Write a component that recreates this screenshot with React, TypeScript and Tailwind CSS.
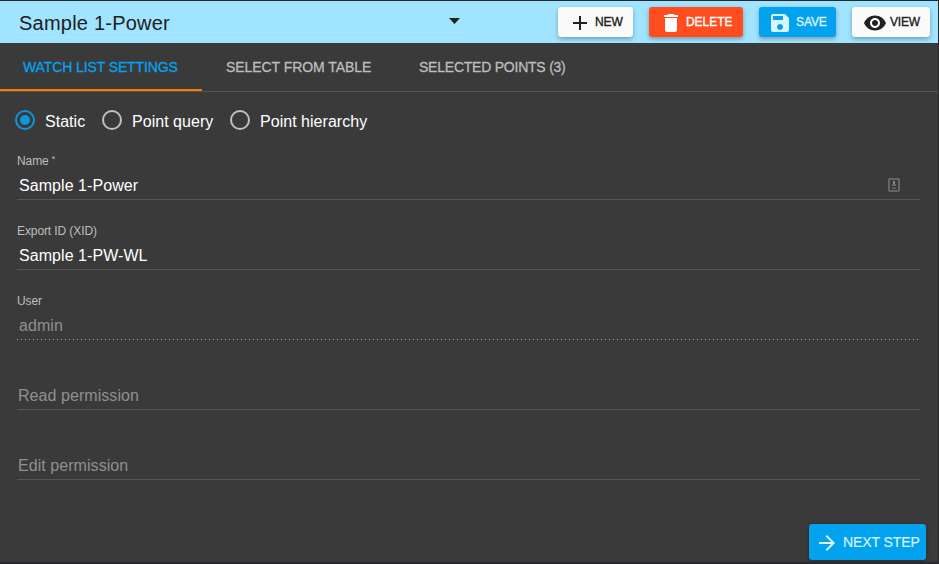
import type { ReactNode } from "react";

const icons = {
  add: "M19 13h-6v6h-2v-6H5v-2h6V5h2v6h6v2z",
  remove: "M6 19c0 1.1.9 2 2 2h8c1.1 0 2-.9 2-2V7H6v12zM19 4h-3.500l-1-1h-5l-1 1H5v2h14V4z",
  save: "M17 3H5c-1.110 0-2 .9-2 2v14c0 1.100.890 2 2 2h14c1.100 0 2-.9 2-2V7l-4-4zm-5 16c-1.660 0-3-1.340-3-3s1.340-3 3-3 3 1.340 3 3-1.340 3-3 3zm3-10H5V5h10v4z",
  view: "M12 4.500C7 4.500 2.730 7.610 1 12c1.730 4.390 6 7.500 11 7.500s9.270-3.110 11-7.500c-1.730-4.390-6-7.500-11-7.500zM12 17c-2.760 0-5-2.240-5-5s2.240-5 5-5 5 2.240 5 5-2.240 5-5 5zm0-8c-1.660 0-3 1.340-3 3s1.340 3 3 3 3-1.340 3-3-1.340-3-3-3z",
  next: "M12 4l-1.410 1.410L16.170 11H4v2h12.170l-5.580 5.590L12 20l8-8z",
};

function Icon({ path, className }: { path: string; className: string }) {
  return (
    <svg viewBox="0 0 24 24" fill="currentColor" className={`shrink-0 ${className}`}>
      <path d={path} />
    </svg>
  );
}

function Action({ icon, iconClass, className, children }: { icon: string; iconClass: string; className: string; children: ReactNode }) {
  return (
    <button
      className={`flex h-[30px] items-center rounded-[3px] text-[12px] leading-none whitespace-nowrap shadow-[0_2px_4px_rgba(0,0,0,0.3)] [-webkit-text-stroke:0.35px_currentColor] ${className}`}
    >
      <Icon path={icon} className={iconClass} />
      {children}
    </button>
  );
}

function Radio({ checked, className, children }: { checked?: boolean; className: string; children: ReactNode }) {
  return (
    <label className={`flex items-start whitespace-nowrap ${className}`}>
      <span className={`flex size-5 items-center justify-center rounded-full border-2 ${checked ? "border-[#0b97d9]" : "border-[#bfbfbf]"}`}>
        {checked && <span className="size-2.5 rounded-full bg-[#0b97d9]" />}
      </span>
      <span className="mt-0.5 ml-2.5">{children}</span>
    </label>
  );
}

function Field({ label, value, line = "border-[#555555] border-solid", valueClass = "", children }: { label?: ReactNode; value: ReactNode; line?: string; valueClass?: string; children?: ReactNode }) {
  return (
    <div className="flex h-[70px] flex-col justify-end">
      <div className="h-[14px] text-[12px] leading-[14px] tracking-[-0.1px] text-[#bdbdbd]">{label}</div>
      <div className={`mt-[2px] flex h-[30px] items-center justify-between border-b pt-px pl-0.5 text-[16px] leading-5 tracking-[0.06px] ${line} ${valueClass}`}>
        <span className="pt-px">{value}</span>
        {children}
      </div>
    </div>
  );
}

export default function App() {
  return (
    <div className="flex h-[564px] w-[939px] flex-col overflow-hidden border-t border-r border-b-2 border-[#29292b] bg-[#3a3a3a] font-['Liberation_Sans',Arial,sans-serif] text-white">
      <header className="flex h-[42px] shrink-0 items-start bg-[#a1e4ff] pt-1.5 text-[#202020]">
        <div className="ml-[17px] flex h-[31px] w-[450px] items-center border-b border-[#ade8ff] pl-0.5">
          <span className="pt-0.5 text-[20px] leading-6 tracking-[0.22px]">Sample 1-Power</span>
          <svg viewBox="0 0 10 5" className="mr-[7px] mb-[2px] ml-auto h-[6px] w-[11px]" preserveAspectRatio="none" fill="currentColor">
            <path d="M0 0h10L5 5z" />
          </svg>
        </div>
        <Action icon={icons.add} iconClass="mr-[3px] mt-0.5 size-6" className="ml-[91px] w-[75px] bg-[#fafafa] pl-2.5 tracking-[-0.1px]">NEW</Action>
        <Action icon={icons.remove} iconClass="mr-[3px] mt-0.5 size-6" className="ml-4 w-[94px] bg-[#ff4d1f] pl-2.5 tracking-[-0.05px] text-white">DELETE</Action>
        <Action icon={icons.save} iconClass="mr-[4px] mt-0.5 size-6" className="ml-4 w-[77px] bg-[#03a2ee] pl-[9px] tracking-[-0.1px] text-[#d9f3ff]">SAVE</Action>
        <Action icon={icons.view} iconClass="mr-[3px] mt-0.5 size-6" className="ml-4 w-[78px] bg-[#fafafa] pl-[11px] tracking-[-0.2px]">VIEW</Action>
      </header>
      <nav className="flex h-[49px] shrink-0 border-b border-[#555555] text-[14px] leading-[48px] whitespace-nowrap text-[#bdbdbd] [-webkit-text-stroke:0.3px_currentColor]">
        <div className="h-12 w-[202px] border-b-2 border-[#ff7a00] pl-[23px] tracking-[-0.11px] text-[#03a2ee]">WATCH LIST SETTINGS</div>
        <div className="w-[193px] pl-6 tracking-[-0.06px]">SELECT FROM TABLE</div>
        <div className="w-[195px] pl-6 tracking-[-0.23px]">SELECTED POINTS (3)</div>
      </nav>
      <main className="flex grow flex-col">
        <div className="mt-[18px] ml-[15px] flex h-[23px] text-[16px] leading-5 tracking-[0.03px]">
          <Radio checked className="w-[87px]">Static</Radio>
          <Radio className="w-[128px]">Point query</Radio>
          <Radio className="">Point hierarchy</Radio>
        </div>
        <div className="-mt-[3px] mr-[18px] ml-[17px]">
          <Field label={<>Name <span className="relative -top-[3px] text-[9px]">*</span></>} value="Sample 1-Power">
            <svg viewBox="0 0 12 14" className="mr-5 h-[14px] w-3" fill="none">
              <rect x="1" y="1" width="10" height="12" rx="0.5" stroke="#747474" strokeWidth="1.5" />
              <path d="M6 3v4" stroke="#858585" strokeWidth="2" />
              <path d="M4 6h4v2H4zM4 9.500h4v1.500H4z" fill="#686868" />
            </svg>
          </Field>
          <Field label="Export ID (XID)" value="Sample 1-PW-WL" />
          <Field label="User" value="admin" line="border-transparent bg-[repeating-linear-gradient(to_right,#aaaaaa_0_1px,transparent_1px_4px)] bg-[length:100%_1px] bg-bottom bg-no-repeat bg-origin-border" valueClass="text-[#909090]" />
          <Field value="Read permission" valueClass="-indent-px text-[#909090]" />
          <Field value="Edit permission" valueClass="-indent-px text-[#909090]" />
        </div>
        <button className="mt-auto mr-3 mb-0.5 ml-auto flex h-9 w-[117px] items-center rounded-[3px] bg-[#03a2ee] pl-1.5 text-[14px] tracking-[-0.1px] whitespace-nowrap text-[#d9f3ff] shadow-[0_1px_4px_rgba(0,0,0,0.3)] [-webkit-text-stroke:0.2px_currentColor]">
          <Icon path={icons.next} className="mt-0.5 mr-1 size-6" />
          NEXT STEP
        </button>
      </main>
    </div>
  );
}
